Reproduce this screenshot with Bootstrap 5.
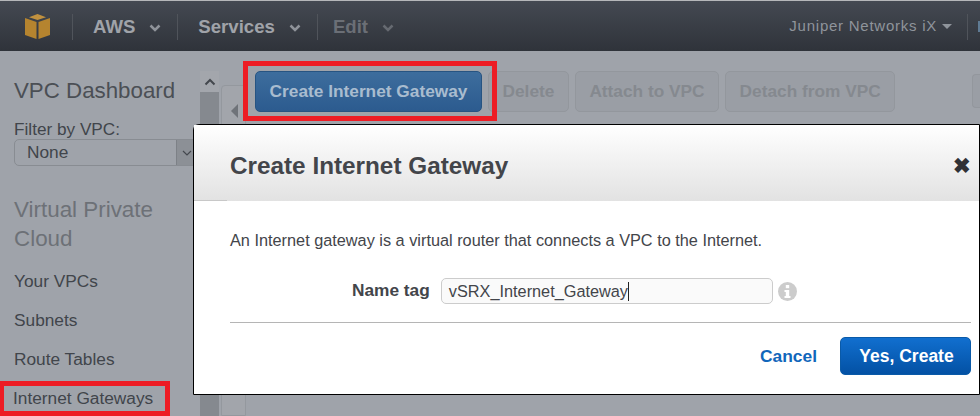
<!DOCTYPE html>
<html lang="en">
<head>
    <meta charset="UTF-8">
    <title>Create Internet Gateway</title>
    <link href="https://cdn.jsdelivr.net/npm/bootstrap@5.3.0/dist/css/bootstrap.min.css" rel="stylesheet">
    <style>
        html, body { height: 416px; overflow: hidden; }
        body { background: #9fa3aa; font-family: "Liberation Sans", Arial, sans-serif; color: #41454b; position: relative; border-top: 1px solid #b5b7ba; }

        .top-bar { height: 50px; background: linear-gradient(#444952, #2f333a); padding: 1px 0 0; flex-wrap: nowrap; }
        .top-logo { width: 73px; height: 26px; border-right: 1px solid #50545b; padding-left: 25px; }
        .top-item { height: 26px; font-size: 18.6px; font-weight: 700; color: #a0a3a9; border-right: 1px solid #50545b; padding: 0 16px 0 20px; gap: 14px; }
        .top-item.off { color: #6b6f76; border-right: 0; padding-left: 15px; }
        .top-item svg { margin-top: 2px; }
        .top-account { font-size: 15px; color: #8f949b; letter-spacing: .75px; padding-right: 15px; border-right: 1px solid #50545b; height: 26px; gap: 5px; margin-right: 10px; }
        .caret-down { width: 0; height: 0; border-left: 5px solid transparent; border-right: 5px solid transparent; border-top: 5px solid #8f949b; }
        .top-stub { width: 2px; height: 11px; background: #5f7b94; }

        .side-panel { width: 200px; height: 365px; padding: 26px 0 0 14px; flex: none; }
        .side-title { font-size: 22.3px; font-weight: 400; line-height: 28px; margin: 0 0 15px; color: #4b4f55; }
        .filter-label { font-size: 17.2px; line-height: 18px; color: #41454b; }
        .filter-box { width: 190px; height: 27px; margin-top: 1px; border: 1px solid #888c92; border-radius: 5px; font-size: 17.3px; color: #41454b; padding-left: 12px; margin-bottom: 29px; }
        .filter-arrow { width: 27px; height: 25px; margin-left: auto; background: #8c9096; border-left: 1px solid #7d8187; padding: 0 0 0 5px; }
        .side-head { font-size: 22.4px; line-height: 29px; color: #6d7177; margin: 0 0 19px; font-weight: 400; }
        .side-link { font-size: 17.3px; line-height: 19px; margin-bottom: 20px; color: #41454b; white-space: nowrap; }
        .side-link.picked { margin: 0 0 0 -1px; }

        .side-scroll { width: 19px; height: 345px; margin-top: 20px; background: #a3a6ac; flex: none; }
        .scroll-thumb { flex: 1; background: #85898f; }
        .scroll-up { height: 21px; }

        .main-panel { flex: 1; padding-top: 20px; min-width: 0; }
        .panel-tab { width: 25px; height: 331px; margin: 34px 0 0 2px; background: #a2a5ab; border: 1px solid #94989e; border-radius: 4px 0 0 0; flex: none; }
        .panel-tab i { display: block; width: 0; height: 0; border-top: 7px solid transparent; border-bottom: 7px solid transparent; border-right: 7px solid #6f7379; margin: 18px 0 0 9px; }
        .tool-row { gap: 6px; padding-left: 9px; }
        .btn-tool { flex: none; height: 41px; font-size: 17.3px; font-weight: 700; padding: 0 13.500px; background: #9a9ea5; border: 1px solid #93979d; color: #85898f; border-radius: 5px; white-space: nowrap; }
        .btn-tool.on { background: linear-gradient(#3d6d9d, #2c5b8f); border-color: #275482; color: #a9bccf; width: 227px; padding: 0; }
        .btn-tool.stub { width: 20px; height: 34px; margin: 3px 0 0 71px; padding: 0; border-radius: 4px 0 0 4px; border-right: 0; }

        .mark-box { position: absolute; border: 5px solid #ed1c24; }
        .mark-a { left: 243px; top: 60px; width: 254px; height: 60px; }
        .mark-b { left: -1px; top: 380px; width: 171px; height: 35px; }

        .gw-dialog { position: absolute; left: 193px; top: 123px; width: 787px; height: 271px; background: #fff; border: 1px solid #000; border-radius: 6px 0 0 0; }
        .gw-head { height: 76px; background: linear-gradient(#c8c8c8, #c8c8c8) left bottom / 33px 1px no-repeat, linear-gradient(#fff, #e2e2e2); padding: 5px 8px 0 36px; }
        .gw-head h1 { font-size: 24.3px; font-weight: 700; margin: 0; color: #43454a; }
        .gw-close { font-size: 21px; font-weight: 700; line-height: 1; color: #2f3136; }
        .gw-body { padding: 29px 8px 0 36px; }
        .gw-intro { font-size: 16.3px; line-height: 20px; margin: 0 0 28px; color: #43454a; }
        .gw-field { gap: 11px; padding-left: 122px; }
        .gw-field label { font-size: 17.3px; font-weight: 700; color: #43454a; }
        .gw-input { width: 332px; height: 26px; border: 1px solid #ccc; border-radius: 5px; background: #fafafa; font-size: 16.3px; line-height: 24px; color: #43454a; padding-left: 7px; }
        .gw-cursor { display: block; height: 19px; border-left: 1px solid #222; }
        .gw-info { margin-left: -6px; }
        .gw-rule { margin: 18px 0 0; border: 0; border-top: 1px solid #b5b5b5; opacity: 1; }
        .gw-foot { gap: 23px; padding-top: 14px; }
        .gw-cancel { font-size: 17.4px; font-weight: 700; color: #1166bb; text-decoration: none; }
        .gw-yes { width: 131px; height: 38px; font-size: 17.5px; font-weight: 700; color: #fff; border: 1px solid #0a5aa8; border-radius: 5px; background: linear-gradient(#116fcf, #0351a4); padding: 0 0 0 2px; }
    </style>
</head>
<body>
    <!-- Top bar -->
    <nav class="navbar top-bar d-flex align-items-center justify-content-between">
        <div class="d-flex align-items-center">
            <div class="top-logo d-flex align-items-center">
                <svg width="25" height="25" viewBox="0 0 25 25">
                    <path d="M12.500 0 21 3.200 12.500 6 4 3.200Z" fill="#c1913f"/>
                    <path d="M0 4 11.500 8V25L0 21Z" fill="#b5842f"/>
                    <path d="M25 4 13.500 8V25L25 21Z" fill="#b5842f"/>
                </svg>
            </div>
            <div class="top-item d-flex align-items-center">AWS
                <svg width="12" height="8" viewBox="0 0 12 8"><path d="M1.500 1.500 6 6l4.500-4.500" fill="none" stroke="#8f939a" stroke-width="2.500"/></svg>
            </div>
            <div class="top-item d-flex align-items-center">Services
                <svg width="12" height="8" viewBox="0 0 12 8"><path d="M1.500 1.500 6 6l4.500-4.500" fill="none" stroke="#8f939a" stroke-width="2.500"/></svg>
            </div>
            <div class="top-item off d-flex align-items-center">Edit
                <svg width="12" height="8" viewBox="0 0 12 8"><path d="M1.500 1.500 6 6l4.500-4.500" fill="none" stroke="#666a71" stroke-width="2.500"/></svg>
            </div>
        </div>
        <div class="d-flex align-items-center">
            <div class="top-account d-flex align-items-center">Juniper Networks iX <span class="caret-down"></span></div>
            <span class="top-stub"></span>
        </div>
    </nav>

    <div class="d-flex">
        <!-- Sidebar -->
        <aside class="side-panel">
            <h2 class="side-title">VPC Dashboard</h2>
            <div class="filter-label">Filter by VPC:</div>
            <div class="filter-box d-flex align-items-center">None
                <span class="filter-arrow d-flex align-items-center">
                    <svg width="10" height="6" viewBox="0 0 10 6"><path d="M1 1 5 5l4-4" fill="none" stroke="#44484e" stroke-width="1.200"/></svg>
                </span>
            </div>
            <h3 class="side-head">Virtual Private Cloud</h3>
            <div class="side-link">Your VPCs</div>
            <div class="side-link">Subnets</div>
            <div class="side-link">Route Tables</div>
            <div class="side-link picked">Internet Gateways</div>
        </aside>
        <div class="side-scroll d-flex flex-column">
            <div class="scroll-up d-flex align-items-center justify-content-center">
                <svg width="12" height="8" viewBox="0 0 12 8"><path d="M1.500 6.500 6 2l4.500 4.500" fill="none" stroke="#44484e" stroke-width="2"/></svg>
            </div>
            <div class="scroll-thumb"></div>
        </div>
        <div class="panel-tab"><i></i></div>

        <!-- Toolbar -->
        <main class="main-panel">
            <div class="tool-row d-flex">
                <button class="btn btn-tool on" type="button">Create Internet Gateway</button>
                <button class="btn btn-tool" type="button">Delete</button>
                <button class="btn btn-tool" type="button">Attach to VPC</button>
                <button class="btn btn-tool" type="button">Detach from VPC</button>
                <button class="btn btn-tool stub" type="button"></button>
            </div>
        </main>
    </div>

    <span class="mark-box mark-a"></span>
    <span class="mark-box mark-b"></span>

    <!-- Dialog -->
    <div class="gw-dialog">
        <div class="gw-head d-flex align-items-center justify-content-between">
            <h1>Create Internet Gateway</h1>
            <span class="gw-close">&#10006;</span>
        </div>
        <div class="gw-body">
            <p class="gw-intro">An Internet gateway is a virtual router that connects a VPC to the Internet.</p>
            <div class="gw-field d-flex align-items-center">
                <label>Name tag</label>
                <div class="gw-input d-flex align-items-center">vSRX_Internet_Gateway<span class="gw-cursor"></span></div>
                <svg class="gw-info" width="19" height="19" viewBox="0 0 19 19">
                    <circle cx="9.500" cy="9.500" r="9.500" fill="#cccccc"/>
                    <rect x="7.800" y="3" width="3.400" height="3.200" fill="#fff"/>
                    <path d="M6.500 8h4.700v6h1.300v2h-6v-2h1.300v-4H6.500Z" fill="#fff"/>
                </svg>
            </div>
            <hr class="gw-rule">
            <div class="gw-foot d-flex justify-content-end align-items-center">
                <a class="gw-cancel" href="#">Cancel</a>
                <button class="btn gw-yes" type="button">Yes, Create</button>
            </div>
        </div>
    </div>
    <script src="https://cdn.jsdelivr.net/npm/bootstrap@5.3.0/dist/js/bootstrap.bundle.min.js"></script>
</body>
</html>
